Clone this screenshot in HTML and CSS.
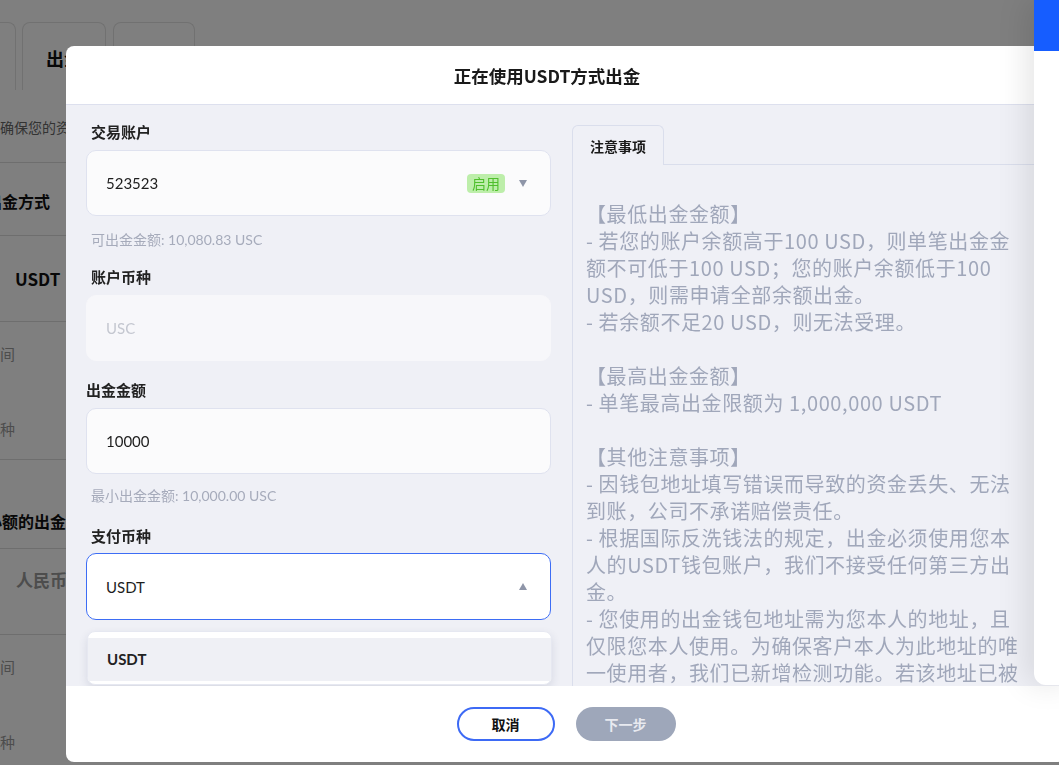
FILE: index.html
```html
<!DOCTYPE html>
<html>
<head>
<meta name="viewport" content="width=device-width, initial-scale=1">
<link rel="stylesheet" href="styles.css">
</head>
<body>

<div class="page">
  <div class="tabs">
    <div class="tab tab-a"></div>
    <div class="tab tab-b">出金</div>
    <div class="tab tab-c"></div>
  </div>
  <p class="page-note">为确保您的资金安全，请选择出金方式</p>
  <div class="row heading-row"><h2 class="heading">出金方式</h2></div>
  <div class="row method-row"><span class="method">USDT</span></div>
  <div class="row info-row">
    <span class="info info-1">到账时间</span>
    <span class="info info-2">支付币种</span>
  </div>
  <div class="row heading-row2"><h2 class="heading">小额的出金方式</h2></div>
  <div class="row method-row2"><span class="method method-off">人民币</span></div>
  <div class="row info-row2">
    <span class="info info-1">到账时间</span>
    <span class="info info-2">支付币种</span>
  </div>
</div>

<div class="overlay"></div>

<div class="modal">
  <div class="modal-head">正在使用USDT方式出金</div>

  <div class="modal-body">
    <div class="form-col">
      <label class="field-label">交易账户</label>
      <div class="box">
        <span class="value">523523</span>
        <span class="tag">启用</span>
        <span class="caret-down"></span>
      </div>
      <p class="hint">可出金金额: 10,080.83 USC</p>

      <label class="field-label label-2">账户币种</label>
      <div class="box box-disabled">
        <span class="value">USC</span>
      </div>

      <label class="field-label label-3">出金金额</label>
      <div class="box">
        <span class="value">10000</span>
      </div>
      <p class="hint hint-2">最小出金金额: 10,000.00 USC</p>

      <label class="field-label label-4">支付币种</label>
      <div class="select-wrap">
        <div class="box box-focus">
          <span class="value">USDT</span>
          <span class="caret-up"></span>
        </div>
        <div class="menu">
          <div class="menu-item">USDT</div>
        </div>
      </div>
    </div>

    <div class="notes-col">
      <div class="notes-tabs">
        <div class="notes-tab">注意事项</div>
      </div>
      <div class="notes-text">【最低出金金额】
- 若您的账户余额高于100 USD，则单笔出金金
额不可低于100 USD；您的账户余额低于100
USD，则需申请全部余额出金。
- 若余额不足20 USD，则无法受理。

【最高出金金额】
- 单笔最高出金限额为 1,000,000 USDT

【其他注意事项】
- 因钱包地址填写错误而导致的资金丢失、无法
到账，公司不承诺赔偿责任。
- 根据国际反洗钱法的规定，出金必须使用您本
人的USDT钱包账户，我们不接受任何第三方出
金。
- 您使用的出金钱包地址需为您本人的地址，且
仅限您本人使用。为确保客户本人为此地址的唯
一使用者，我们已新增检测功能。若该地址已被
其他客户使用，将无法提交出金申请。</div>
    </div>
  </div>

  <div class="modal-foot">
    <button class="btn btn-cancel">取消</button>
    <button class="btn btn-next">下一步</button>
  </div>
</div>

<div class="side">
  <div class="side-bar"></div>
</div>

</body>
</html>
```

FILE: styles.css
```css
* {
  box-sizing: border-box;
}

body {
  margin: 0;
  width: 1059px;
  height: 765px;
  overflow: hidden;
  background: #fff;
  font-family: "Noto Sans CJK SC", "Noto Sans", sans-serif;
  color: #222;
}

/* page behind the dialog */
.page {
  margin-left: -26px;
  width: 1100px;
}

.tabs {
  display: flex;
  padding-top: 22px;
  height: 90px;
}

.tab {
  height: 68px;
  border: 1px solid #e2e2e2;
  border-bottom: none;
  border-radius: 8px 8px 0 0;
}

.tab-a {
  width: 42px;
}

.tab-b {
  width: 84px;
  margin-left: 6px;
  text-align: center;
  line-height: 70px;
  font-weight: bold;
  font-size: 18px;
  color: #111;
}

.tab-c {
  width: 82px;
  margin-left: 7px;
}

.page-note {
  margin: 0;
  padding: 27px 0 25px 12px;
  line-height: 20px;
  font-size: 14px;
  color: #666;
  border-bottom: 1px solid #dcdcdc;
}

.row {
  border-bottom: 1px solid #dcdcdc;
}

.heading {
  margin: 0;
  font-size: 16px;
  line-height: 24px;
  color: #111;
}

.heading-row {
  height: 73px;
  padding: 26px 0 0 12px;
}

.method-row {
  height: 86px;
  padding: 31px 0 0 41px;
}

.method {
  font-size: 17px;
  font-weight: bold;
  line-height: 24px;
  color: #111;
}

.method-off {
  color: #9a9a9a;
}

.info-row {
  height: 138px;
  padding: 22px 0 0 0;
}

.info {
  display: block;
  font-size: 15px;
  line-height: 20px;
  color: #9a9a9a;
  text-indent: -19px;
}

.info-2 {
  margin-top: 55px;
}

.heading-row2 {
  height: 89px;
  padding: 49px 0 0 12px;
}

.method-row2 {
  height: 86px;
  padding: 19px 0 0 42px;
}

.info-row2 {
  height: 140px;
  padding: 22px 0 0 0;
}

.overlay {
  position: fixed;
  inset: 0;
  background: rgba(0, 0, 0, 0.5);
}

/* dialog */
.modal {
  position: fixed;
  left: 66px;
  top: 46px;
  width: 1000px;
  height: 716px;
  background: #fff;
  border-radius: 8px;
  display: flex;
  flex-direction: column;
  overflow: hidden;
}

.modal-head {
  height: 59px;
  flex: none;
  display: flex;
  align-items: center;
  justify-content: center;
  padding-right: 38px;
  border-bottom: 1px solid #dde0ee;
  font-size: 17.5px;
  font-weight: bold;
  color: #1a1a1a;
}

.modal-body {
  flex: 1;
  display: flex;
  gap: 21px;
  padding-left: 20px;
  background: #eff0f6;
  overflow: hidden;
}

.form-col {
  width: 465px;
  flex: none;
  padding-top: 17px;
  font-family: Lato, "Noto Sans CJK SC", sans-serif;
}

.field-label {
  display: block;
  padding-left: 5px;
  margin-bottom: 8px;
  font-size: 15px;
  font-weight: bold;
  line-height: 20px;
  color: #222;
}

.label-2 {
  margin-top: 17px;
}

.label-3 {
  margin-top: 19px;
  padding-left: 0;
}

.label-4 {
  margin-top: 20px;
  margin-bottom: 7px;
}

.box {
  height: 66px;
  display: flex;
  align-items: center;
  padding: 0 23px 0 19px;
  background: #fbfbfc;
  border: 1px solid #dfe2ef;
  border-radius: 10px;
  font-size: 15px;
  color: #1e1e1e;
}

.value {
  flex: 1;
}

.box-disabled {
  background: #f7f7fa;
  border-color: #f7f7fa;
  color: #c4c7d0;
}

.box-focus {
  height: 67px;
  background: #fff;
  border-color: #3d6df5;
}

.tag {
  padding: 0 5px;
  height: 19px;
  line-height: 19px;
  border-radius: 4px;
  background: #bdeeaa;
  color: #4fbf2c;
  font-size: 14px;
  font-family: "Noto Sans CJK SC", sans-serif;
}

.caret-down {
  margin-left: 14px;
  border-left: 4.5px solid transparent;
  border-right: 4.5px solid transparent;
  border-top: 7px solid #8e95a8;
}

.caret-up {
  border-left: 4.5px solid transparent;
  border-right: 4.5px solid transparent;
  border-bottom: 7px solid #8e95a8;
}

.hint {
  margin: 14px 0 0 5px;
  font-size: 14px;
  line-height: 20px;
  color: #a6abbb;
}

.hint-2 {
  margin-top: 12px;
}

.select-wrap {
  position: relative;
}

/* open dropdown */
.menu {
  position: absolute;
  top: calc(100% + 11px);
  left: 1px;
  right: -1px;
  height: 54px;
  padding: 6px 0 5px;
  background: #fff;
  border: 1px solid #e6e8f1;
  border-radius: 8px;
  box-shadow: 0 4px 10px rgba(40, 50, 90, 0.12);
}

.menu-item {
  height: 43px;
  line-height: 43px;
  padding-left: 19px;
  background: #eff0f5;
  font-size: 15px;
  font-weight: bold;
  color: #222;
}

/* notes */
.notes-col {
  flex: 1;
  display: flex;
  flex-direction: column;
  padding-top: 20px;
  min-width: 0;
}

.notes-tabs {
  display: flex;
  height: 40px;
  flex: none;
}

.notes-tabs::after {
  content: "";
  flex: 1;
  border-bottom: 1px solid #dadeec;
}

.notes-tab {
  width: 92px;
  border: 1px solid #dadeec;
  border-bottom: none;
  border-radius: 6px 6px 0 0;
  text-align: center;
  line-height: 40px;
  font-size: 14px;
  font-weight: bold;
  color: #1a1a1a;
}

.notes-text {
  flex: 1;
  overflow: hidden;
  border-left: 1px solid #dadeec;
  padding: 35px 10px 0 13px;
  white-space: pre;
  font-size: 20px;
  line-height: 27px;
  letter-spacing: 0.6px;
  color: #a0a7ba;
}

.modal-foot {
  height: 76px;
  flex: none;
  display: flex;
  align-items: center;
  justify-content: center;
  gap: 21px;
}

.btn {
  height: 34px;
  border-radius: 17px;
  font-family: inherit;
  font-size: 14px;
  font-weight: bold;
  cursor: pointer;
}

.btn-cancel {
  width: 98px;
  background: #fff;
  border: 2px solid #3d6af5;
  color: #111;
}

.btn-next {
  width: 100px;
  background: #9ea7ba;
  border: none;
  color: #e8eaf0;
}

/* side drawer at the right edge */
.side {
  position: fixed;
  left: 1034px;
  top: 0;
  width: 40px;
  height: 685px;
  background: #fff;
  border-bottom-left-radius: 12px;
  box-shadow: -8px 0 30px rgba(0, 0, 0, 0.1);
}

.side-bar {
  height: 51px;
  background: #165dff;
}
```
